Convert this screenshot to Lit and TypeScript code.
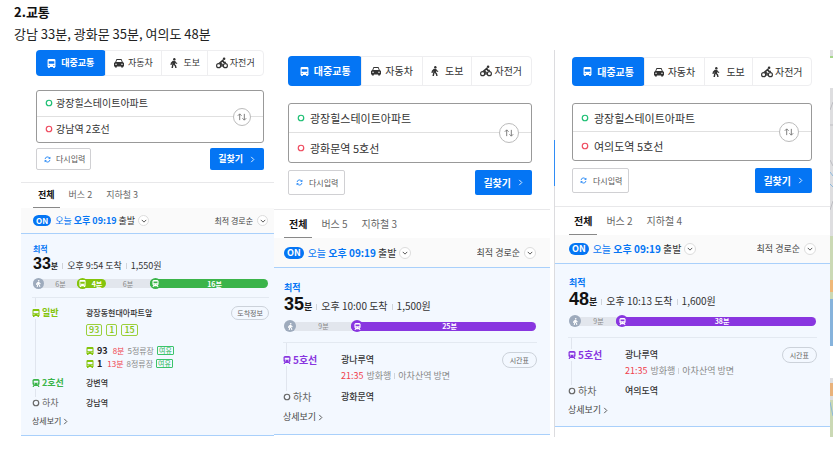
import { LitElement, html, css, svg, nothing } from "lit";
import { customElement, property } from "lit/decorators.js";
import { classMap } from "lit/directives/class-map.js";
import { styleMap } from "lit/directives/style-map.js";

type IconName = "bus" | "car" | "walk" | "bike" | "train" | "refresh" | "swap" | "right" | "down" | "ring";
type Tone = "walk" | "bus" | "line2" | "line5";

interface Segment { tone: Tone; icon?: IconName; label: string; weight: number; }
interface Arrival { route: string; wait: string; stops: string; seats: string; }
interface Leg {
  tone: Tone | "off"; icon: IconName; line: string; station: string; action?: string;
  routes?: string[]; arrivals?: Arrival[]; time?: string; bound?: string; via?: string;
}
interface Route {
  id: string; size: string; from: string; to: string; buses: number; subways: number;
  minutes: number; arrive: string; fare: string; segments: Segment[]; legs: Leg[];
}

const shapes = {
  bus: svg`<path fill-rule="evenodd" d="M2.500 0h11L15 1.500V14h-1v2h-3v-2H5v2H2v-2H1V1.500zM3 4v4.500h10V4zM3 10.500V12h2v-1.500zm8 0V12h2v-1.500z"/>`,
  car: svg`<path fill-rule="evenodd" d="M4 1.500h8l2 4.700 2 1.800v5.500h-1.500V15h-3v-1.500h-7V15h-3v-1.500H0V8l2-1.800zM4.800 3.200L3.600 6.500h8.800l-1.200-3.300zM2 9v1.800h2.500V9zm9.500 0v1.800H14V9z"/>`,
  walk: svg`<circle cx="8.500" cy="1.900" r="1.900"/><path d="M6 4.300h4l1 2.500 2.400 1.300-.7 1.500L9.800 8.400l-.3 1.400 1.900 2.200.8 4H10l-.8-3.200-1.900-1.900-1 5.100H3.900L5.500 8.200l-.9.800-.4 2.200H2.300l.6-3.500z"/>`,
  bike: svg`<g fill="none" stroke="currentColor" stroke-width="1.500"><circle cx="3.500" cy="11.500" r="2.700"/><circle cx="12.500" cy="11.500" r="2.700"/><path stroke-width="2.200" d="M8 13V9.800L5.200 8 9 4.700l1.600 2.600h2.600"/></g><circle cx="10.800" cy="2.300" r="1.700"/>`,
  train: svg`<path fill-rule="evenodd" d="M3.500 0h9L15 2v8.500L13 12l2 4h-2.500l-1-2h-7l-1 2H1l2-4-2-1.500V2zM3.500 3.500v4h9v-4zM4 9v1.500h2V9zm6 0v1.500h2V9z"/>`,
  refresh: svg`<path fill="none" stroke="currentColor" stroke-width="1.800" d="M2.500 7A5.600 5.600 0 0 1 13 5M13.500 9A5.600 5.600 0 0 1 3 11"/><path d="M14.500 1.500v5h-5zM1.500 14.500v-5h5z"/>`,
  swap: svg`<path fill="none" stroke="currentColor" stroke-width="1.500" d="M4.300 13V3M1.300 6l3-3 3 3M11.700 3v10M8.700 10l3 3 3-3"/>`,
  right: svg`<path fill="none" stroke="currentColor" stroke-width="2" d="M5 2l6 6-6 6"/>`,
  down: svg`<path fill="none" stroke="currentColor" stroke-width="2.600" d="M2 5l6 6 6-6"/>`,
  ring: svg`<circle cx="8" cy="8" r="5.500" fill="none" stroke="currentColor" stroke-width="2.400"/>`,
};

const icon = (name: IconName) =>
  html`<svg class="icon" viewBox="0 0 16 16" fill="currentColor" aria-hidden="true">${shapes[name]}</svg>`;

const subwayLegs = (to: string): Leg[] => [
  { tone: "line5", icon: "train", line: "5호선", station: "광나루역", action: "시간표", time: "21:35", bound: "방화행", via: "아차산역 방면" },
  { tone: "off", icon: "ring", line: "하차", station: to },
];

const routes: Route[] = [
  {
    id: "gangnam", size: "small", from: "광장힐스테이트아파트", to: "강남역 2호선", buses: 2, subways: 3,
    minutes: 33, arrive: "오후 9:54 도착", fare: "1,550원",
    segments: [
      { tone: "walk", icon: "walk", label: "6분", weight: 44 },
      { tone: "bus", icon: "bus", label: "4분", weight: 29 },
      { tone: "walk", label: "6분", weight: 44 },
      { tone: "line2", icon: "train", label: "16분", weight: 118 },
    ],
    legs: [
      {
        tone: "bus", icon: "bus", line: "일반", station: "광장동현대아파트앞", action: "도착정보",
        routes: ["93", "1", "15"],
        arrivals: [
          { route: "93", wait: "8분", stops: "5정류장", seats: "여유" },
          { route: "1", wait: "13분", stops: "8정류장", seats: "여유" },
        ],
      },
      { tone: "line2", icon: "train", line: "2호선", station: "강변역" },
      { tone: "off", icon: "ring", line: "하차", station: "강남역" },
    ],
  },
  {
    id: "gwanghwamun", size: "large", from: "광장힐스테이트아파트", to: "광화문역 5호선", buses: 5, subways: 3,
    minutes: 35, arrive: "오후 10:00 도착", fare: "1,500원",
    segments: [
      { tone: "walk", icon: "walk", label: "9분", weight: 67 },
      { tone: "line5", icon: "train", label: "25분", weight: 185 },
    ],
    legs: subwayLegs("광화문역"),
  },
  {
    id: "yeouido", size: "medium", from: "광장힐스테이트아파트", to: "여의도역 5호선", buses: 2, subways: 4,
    minutes: 48, arrive: "오후 10:13 도착", fare: "1,600원",
    segments: [
      { tone: "walk", icon: "walk", label: "9분", weight: 47 },
      { tone: "line5", icon: "train", label: "38분", weight: 200 },
    ],
    legs: subwayLegs("여의도역"),
  },
];

@customElement("route-panel")
class RoutePanel extends LitElement {
  @property({ attribute: false }) route!: Route;

  static styles = css`
    :host { display: block; min-width: 0; }
    * { box-sizing: border-box; }
    button, input, select { font: inherit; color: inherit; margin: 0; padding: 0; border: 0; background: none; appearance: none; border-radius: 0; white-space: nowrap; }
    .icon { width: 10px; height: 10px; flex: none; display: block; }
    .panel {
      --text: 10px; --note: 9px; --tiny: 7px; --field: 11px; --big: 18px;
      --top: 7px; --left: 14px; --right: 18px; --mode: 29px; --gap: 17px; --box: 58px; --act: 25px;
      --under: 13px; --bar: 28px; --filter: 28px; --in-l: 10px; --in-r: 14px; --sum-top: 13px; --num: 21px;
      --dot: 12px; --seg-gap: 5px; --seg-end: 10px; --pad: 9px; --row: 16px; --leg-gap: 4px; --label: 58px;
      --swap: 20px; --tail: 8px; --tail-gap: 3px; --act-gap: 7px; --side: 7px; --inner: 6px; --point-gap: 5px;
      color: #333; background: #fff; font-size: var(--text); line-height: 12px;
    }
    .small {
      --text: 9px; --note: 8px; --field: 10px; --big: 16px;
      --top: 0px; --left: 15px; --right: 10px; --mode: 26px; --gap: 14px; --box: 53px; --act: 22px;
      --under: 12px; --bar: 25px; --filter: 25px; --in-l: 12px; --in-r: 6px; --sum-top: 9px; --num: 18px;
      --dot: 11px; --seg-end: 8px; --pad: 8px; --row: 14px; --leg-gap: 6px; --label: 54px;
      --swap: 18px; --tail: 7px; --tail-gap: 4px; --act-gap: 5px; --side: 5px; --inner: 5px; --point-gap: 3px;
    }
    .large { --mode: 30px; --box: 60px; --under: 14px; --top: 6px; --filter: 29px; --sum-top: 14px; --leg-gap: 5px; --tail-gap: 4px; --tail: 9px; }
    .medium { --left: 17px; --in-l: 14px; --label: 57px; }

    .search { padding: var(--top) var(--right) var(--under) var(--left); border-bottom: 1px solid #e8e8ea; }
    .modes { display: grid; grid-template-columns: 73fr 61fr 49fr 61fr; height: var(--mode); border: 1px solid #eeeef0; border-radius: 4px; }
    .mode { display: flex; align-items: center; justify-content: center; gap: 4px; color: #333; border-left: 1px solid #eeeef0; }
    .mode:nth-child(n + 3) { gap: 5px; }
    .mode:last-child { gap: 2px; }
    .mode:last-child .icon { width: 12px; height: 12px; }
    .mode.on { background: #0475f4; color: #fff; font-weight: 700; border: 0; border-radius: 4px; margin: -1px; gap: 5px; }
    .mode.on .icon { width: 9px; height: 9px; }
    .points { position: relative; margin-top: var(--gap); height: var(--box); border: 1px solid #999; border-radius: 3px; display: grid; grid-template-rows: 1fr 1fr; font-size: var(--field); }
    .point { display: flex; align-items: center; gap: var(--point-gap); padding: 0 36px 0 8px; color: #ef4b5f; }
    .point:first-child { color: #1dbf73; border-bottom: 1px solid #e0e0e0; }
    .point .icon { width: 8px; height: 8px; }
    .point input { flex: 1; min-width: 0; color: #333; outline: 0; }
    .swap { position: absolute; right: 12px; top: 50%; margin-top: calc(var(--swap) / -2); width: var(--swap); height: var(--swap); border: 1px solid #bbb; border-radius: 50%; background: #fff; color: #777; display: grid; place-items: center; }
    .actions { display: flex; justify-content: space-between; height: var(--act); margin-top: var(--act-gap); }
    .reset { display: flex; align-items: center; gap: var(--inner); padding: 0 var(--inner) 0 7px; border: 1px solid #d0d0d3; border-radius: 2px; font-size: 8px; color: #555; }
    .reset .icon { width: 7px; height: 7px; color: #0475f4; }
    .find { display: flex; align-items: center; gap: 6px; padding: 0 8px; border-radius: 2px; background: #0475f4; color: #fff; font-weight: 700; }
    .find .icon { width: 7px; height: 7px; }

    .tabs { display: flex; gap: 4px; height: var(--bar); padding: 0 var(--in-l); }
    .tab { padding: 0 5px; color: #666; border-bottom: 1px solid transparent; }
    .tab.on { color: #111; font-weight: 700; border-color: #888; }
    .filter { display: flex; align-items: center; justify-content: space-between; height: var(--filter); padding: 0 var(--in-r) 0 var(--in-l); background: #fafafa; }
    .depart { display: flex; align-items: center; gap: 3px; }
    .badge { background: #0475f4; color: #fff; font-size: var(--note); font-weight: 700; line-height: var(--dot); border-radius: 6px; padding: 0 3px; margin-right: 1px; }
    .when { color: #0475f4; }
    .lead { color: #333; }
    .round { width: var(--dot); height: var(--dot); border: 1px solid #ddd; border-radius: 50%; background: #fff; color: #555; display: grid; place-items: center; }
    .round .icon { width: 6px; height: 6px; }
    .sort { display: flex; align-items: center; gap: 4px; color: #444; font-size: var(--note); }
    .sort select { field-sizing: content; }

    .result { background: #f3f8ff; border-top: 1px solid #a9d0fb; border-bottom: 1px solid #a9d0fb; padding: var(--sum-top) var(--in-r) var(--tail) var(--in-l); }
    .best { display: block; color: #0475f4; font-size: var(--note); font-weight: 700; line-height: 12px; }
    .total { display: flex; align-items: baseline; height: var(--num); line-height: var(--num); font-size: var(--text); white-space: nowrap; }
    .total b { font-family: "Liberation Sans", sans-serif; font-size: var(--big); color: #111; }
    .total strong { font-size: var(--note); color: #222; }
    .total .cut { margin: 0 4px; }
    .cut { display: inline-block; width: 1px; height: 6px; background: #d0d4da; }
    .segments { display: flex; align-items: center; height: var(--dot); margin: var(--seg-gap) 0 var(--seg-end); border-radius: 6px; background: linear-gradient(#e2e6ed, #e2e6ed) center / 100% 9px no-repeat; }
    .segment { display: flex; align-items: center; height: 9px; min-width: 0; font-size: var(--tiny); border-radius: 5px; color: #fff; font-weight: 700; }
    .segment span { flex: 1; text-align: center; }
    .stop { width: var(--dot); height: var(--dot); border-radius: 50%; display: grid; place-items: center; flex: none; }
    .stop .icon { width: 7px; height: 7px; }
    .segment.walk { color: #888; font-weight: 400; }
    .walk .stop { background: #9eabbd; color: #fff; }
    .segment.bus, .bus .stop { background: #84c40b; }
    .segment.line2, .line2 .stop { background: #3bb44a; }
    .segment.line5, .line5 .stop { background: #8936e0; }

    .legs { position: relative; list-style: none; margin: 0 -1px; padding: var(--pad) 0 0; border-top: 1px solid #e3e9f1; display: grid; gap: var(--leg-gap); }
    .legs::before { content: ""; position: absolute; left: 3px; top: 0; bottom: 6px; width: 1px; background: #e0e5ee; }
    .leg { position: relative; display: grid; grid-template-columns: var(--label) 1fr auto; font-size: var(--note); line-height: var(--row); }
    .name { display: flex; align-items: center; gap: 2px; height: var(--row); font-weight: 700; font-size: var(--text); }
    .name .icon { width: 8px; height: 12px; padding: 2px 0; background: #f3f8ff; }
    .name.bus { color: #84c40b; }
    .name.line2 { color: #3bb44a; }
    .name.line5 { color: #8936e0; }
    .name.off { color: #666; font-weight: 400; }
    .station { font-weight: 500; color: #333; white-space: nowrap; }
    .info { height: var(--row); padding: 0 var(--side); border: 1px solid #ccd2da; border-radius: 8px; font-size: var(--tiny); line-height: 10px; color: #666; }
    .bound { display: flex; align-items: center; gap: 3px; color: #888; white-space: nowrap; }
    .red { color: #f0404c; }
    .chips { display: flex; gap: 4px; margin: 4px 0 8px; font-size: var(--text); }
    .chip { border: 1px solid #9bd03c; border-radius: 2px; color: #84c40b; line-height: 10px; padding: 0 2px; font-weight: 500; }
    .arrival { display: flex; align-items: center; gap: 3px; height: 13px; color: #888; white-space: nowrap; }
    .arrival > .icon { width: 8px; height: 8px; color: #84c40b; }
    .arrival b { color: #222; margin-right: 2px; font-size: var(--text); }
    .seats { border: 1px solid #3bc46a; border-radius: 1px; color: #2fb95d; font-size: var(--tiny); line-height: 7px; padding: 0 1px; }
    .more { display: flex; align-items: center; gap: 1px; margin: var(--tail-gap) -1px 0; font-size: var(--note); line-height: var(--row); color: #444; text-decoration: none; }
    .more .icon { width: 7px; height: 7px; }
  `;

  private leg(l: Leg) {
    return html`<li class="leg">
      <span class="name ${l.tone}">${icon(l.icon)}${l.line}</span>
      <div>
        <div class="station">${l.station}</div>
        ${l.routes ? html`<div class="chips">${l.routes.map((r) => html`<span class="chip">${r}</span>`)}</div>` : nothing}
        ${l.arrivals?.map((a) => html`<div class="arrival">${icon("bus")}<b>${a.route}</b><span class="red">${a.wait}</span><span>${a.stops}</span><span class="seats">${a.seats}</span></div>`)}
        ${l.time ? html`<div class="bound"><span class="red">${l.time}</span>${l.bound}<i class="cut"></i>${l.via}</div>` : nothing}
      </div>
      ${l.action ? html`<button class="info">${l.action}</button>` : nothing}
    </li>`;
  }

  render() {
    const r = this.route;
    return html`<section class=${classMap({ panel: true, [r.size]: true })}>
      <form class="search" @submit=${(e: Event) => e.preventDefault()}>
        <div class="modes">
          <button type="button" class="mode on">${icon("bus")}대중교통</button>
          <button type="button" class="mode">${icon("car")}자동차</button>
          <button type="button" class="mode">${icon("walk")}도보</button>
          <button type="button" class="mode">${icon("bike")}자전거</button>
        </div>
        <div class="points">
          <label class="point">${icon("ring")}<input aria-label="출발지" .value=${r.from} /></label>
          <label class="point">${icon("ring")}<input aria-label="도착지" .value=${r.to} /></label>
          <button type="button" class="swap" aria-label="출발지와 도착지 바꾸기">${icon("swap")}</button>
        </div>
        <div class="actions">
          <button type="reset" class="reset">${icon("refresh")}다시입력</button>
          <button class="find">길찾기 ${icon("right")}</button>
        </div>
      </form>
      <nav class="tabs">
        <button class="tab on">전체</button>
        <button class="tab">버스 ${r.buses}</button>
        <button class="tab">지하철 ${r.subways}</button>
      </nav>
      <div class="filter">
        <button class="depart">
          <span class="badge">ON</span><span class="lead"><span class="when">오늘 <b>오후 09:19</b></span> 출발</span><span class="round">${icon("down")}</span>
        </button>
        <label class="sort">
          <select aria-label="정렬"><option>최적 경로순</option></select><span class="round">${icon("down")}</span>
        </label>
      </div>
      <article class="result">
        <span class="best">최적</span>
        <div class="total"><b>${r.minutes}</b><strong>분</strong><i class="cut"></i>${r.arrive}<i class="cut"></i>${r.fare}</div>
        <div class="segments">
          ${r.segments.map((s) => html`<div class="segment ${s.tone}" style=${styleMap({ flex: `${s.weight} 1 0` })}>
            ${s.icon ? html`<i class="stop">${icon(s.icon)}</i>` : nothing}<span>${s.label}</span>
          </div>`)}
        </div>
        <ol class="legs">${r.legs.map((l) => this.leg(l))}</ol>
        <a class="more" href="#${r.id}">상세보기${icon("right")}</a>
      </article>
    </section>`;
  }
}

@customElement("app-root")
class AppRoot extends LitElement {
  static styles = css`
    :host { display: block; background: #fff; color: #222; font-family: "Noto Sans CJK KR", sans-serif; }
    .head { padding: 2px 14px 5px; }
    .title { margin: 0; font-size: 13px; line-height: 20px; font-weight: 700; color: #111; }
    .times { margin: 0; font-size: 13px; line-height: 23px; }
    .panels { display: grid; grid-template-columns: 253fr 276fr 280fr 3px; padding-left: 21px; align-items: stretch; }
    .third { position: relative; margin-left: 4px; border-left: 1px solid #dcdcdf; }
    .handle { position: absolute; left: -1px; top: 90px; width: 1px; height: 46px; background: #2f8cf5; }
    .map { display: block; width: 3px; height: 100%; }
  `;

  render() {
    return html`
      <header class="head">
        <h1 class="title">2.교통</h1>
        <p class="times">강남 33분, 광화문 35분, 여의도 48분</p>
      </header>
      <main class="panels">
        <route-panel .route=${routes[0]}></route-panel>
        <route-panel .route=${routes[1]}></route-panel>
        <div class="third"><i class="handle"></i><route-panel .route=${routes[2]}></route-panel></div>
        <svg class="map" viewBox="0 0 3 387" preserveAspectRatio="none" aria-hidden="true">
          <rect width="3" height="387" fill="#dedee0" />
          <rect y="6" width="3" height="2" fill="#a5d68a" />
          <rect y="8" width="3" height="30" fill="#fff" />
          <path d="M0 60l3-8M0 75h3M0 110l3 6M0 160l3-9" stroke="#bdbdc2" />
          <path d="M0 122l3 4M0 134l3 3" stroke="#8cb8dc" />
          <rect y="186" width="3" height="110" fill="#cbd9b5" />
          <rect y="230" width="3" height="12" fill="#efb878" />
          <rect y="249" width="3" height="47" fill="#86b3dc" />
          <rect y="296" width="3" height="32" fill="#fff" />
          <rect y="333" width="3" height="13" fill="#e9b27b" />
          <rect y="350" width="3" height="37" fill="#cbd9b5" />
          <path d="M0 352l3 14" stroke="#8cb8dc" />
        </svg>
      </main>
    `;
  }
}
